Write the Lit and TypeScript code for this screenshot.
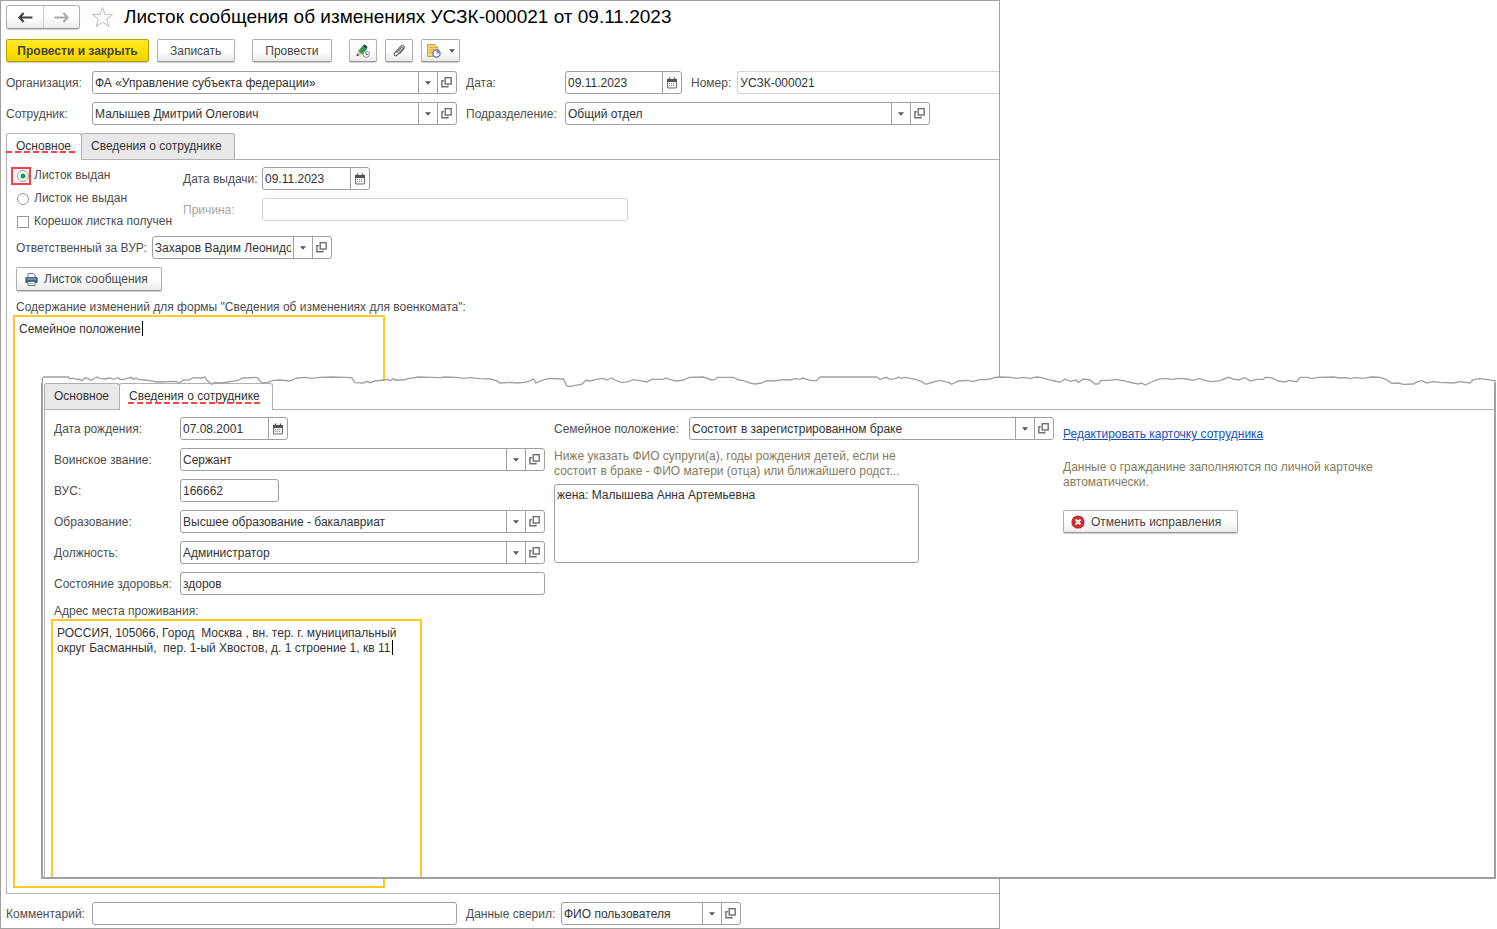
import { LitElement, html, css } from "lit";
import { customElement } from "lit/decorators.js";
import { classMap } from "lit/directives/class-map.js";

// Torn edge outline, in thirds of a pixel: [x offset, x, y, x, y, ...]
const EDGE: number[][] = [
  [0, 37, 75, 37, 40, 42, 36, 115, 36, 120, 42, 128, 39, 135, 42, 150, 43, 157, 47, 165, 38, 175, 41, 182, 46, 190, 42, 200, 36, 210, 40, 225, 42, 240, 39, 250, 43, 265, 38, 270, 43, 283, 43, 292, 40, 303, 37, 310, 43, 318, 39, 325, 43, 345, 45, 360, 47, 380, 51, 440, 49, 445, 54, 455, 49, 462, 44, 475, 46, 490, 38, 515, 39, 525, 36, 530, 45, 545, 58, 553, 52, 575, 54, 600, 50, 625, 46, 640, 38, 655, 39, 670, 37, 683, 38, 690, 47, 697, 53, 712, 53, 730, 46, 750, 45, 780, 48, 800, 39, 825, 37, 845, 40, 870, 37, 905, 36, 965, 38, 975, 53, 1000, 54, 1010, 49, 1020, 53, 1035, 48, 1060, 45, 1075, 43, 1080, 48, 1090, 41, 1095, 45, 1120, 45, 1140, 40, 1165, 36, 1200, 37, 1230, 38, 1245, 36, 1280, 37, 1300, 40, 1320, 38, 1350, 41, 1380, 42, 1400, 47, 1410, 54],
  [1410, 30, 52, 50, 54, 75, 52, 90, 48, 100, 42, 108, 54, 120, 49, 135, 43, 150, 40, 190, 42, 200, 62, 210, 65, 225, 61, 245, 58, 258, 46, 270, 48, 290, 43, 310, 40, 320, 45, 335, 39, 345, 45, 365, 53, 385, 50, 400, 44, 420, 47, 440, 51, 455, 43, 490, 43, 498, 39, 510, 44, 530, 48, 550, 45, 568, 37, 610, 36, 635, 45, 645, 44, 652, 37, 700, 37, 718, 45, 730, 47, 750, 54, 765, 57, 785, 54, 800, 47, 820, 48, 850, 44, 870, 45, 885, 41, 900, 43, 908, 39, 920, 43, 935, 47, 950, 47, 960, 36, 1130, 36, 1140, 43, 1160, 37, 1170, 43, 1190, 40, 1195, 36, 1205, 40, 1215, 37, 1250, 44, 1265, 50, 1278, 58, 1300, 51, 1320, 46, 1345, 52, 1355, 58, 1375, 48, 1400, 46, 1420, 49, 1440, 44, 1460, 44],
  [2880, 0, 42, 15, 37, 30, 36, 60, 37, 80, 40, 100, 37, 120, 40, 140, 36, 155, 38, 175, 44, 195, 48, 210, 52, 225, 42, 240, 49, 258, 45, 265, 52, 280, 42, 300, 45, 315, 57, 325, 57, 333, 46, 360, 46, 375, 43, 400, 47, 430, 54, 445, 57, 455, 54, 465, 60, 485, 51, 505, 43, 525, 40, 545, 43, 570, 40, 590, 42, 610, 46, 628, 40, 645, 46, 665, 50, 690, 47, 715, 37, 730, 42, 745, 45, 765, 38, 782, 48, 800, 43, 820, 43, 825, 37, 845, 38, 865, 48, 885, 51, 895, 46, 920, 50, 930, 37, 955, 37, 965, 41, 985, 37, 1030, 36, 1050, 39, 1070, 38, 1080, 41, 1095, 38, 1120, 40, 1145, 36, 1170, 37, 1190, 44, 1205, 55, 1225, 54, 1240, 58, 1270, 57, 1280, 51, 1297, 47, 1310, 54, 1330, 50, 1350, 52, 1390, 54, 1412, 50, 1440, 54, 1450, 44, 1470, 41, 1490, 43, 1512, 47, 1515, 47, 1515, 75],
];
const EDGE_POINTS = EDGE.map(([dx, ...p]) =>
  p.map((v, i) => (i % 2 ? `${v}` : `${v + dx}`)).join(" "),
).join(" ");

const arrowDown = html`<svg class="ic" width="6" height="4" viewBox="0 0 6 4" aria-hidden="true"><path d="M0 0.300h6L3 3.800z" fill="#555" /></svg>`;
const openIcon = html`<svg class="ic" width="12" height="11" viewBox="0 0 12 11" aria-hidden="true"><g fill="none" stroke="#707070" stroke-width="1.400"><rect x="4.200" y="0.700" width="6" height="6.300" /><path d="M2.800 3.700H0.900v6h6V8.400" /></g></svg>`;
const calendarIcon = html`<svg class="ic" width="12" height="12" viewBox="0 0 12 12" aria-hidden="true"><path d="M1.500 2.500h9v8.500h-9z" fill="#eee" stroke="#777" /><path d="M1 2h10v3H1z" fill="#555" /><path d="M3.500 0.600v2.400M8.500 0.600v2.400" stroke="#555" stroke-width="1.400" /><path d="M3 6.500h6M3 8.500h6" stroke="#999" stroke-dasharray="1 1" /></svg>`;
const backIcon = html`<svg class="ic" width="15" height="11" viewBox="0 0 15 11" aria-hidden="true"><path d="M5.600 1L1.400 5.500l4.200 4.500M1.600 5.500H14.500" fill="none" stroke="currentColor" stroke-width="2.200" /></svg>`;
const forwardIcon = html`<svg class="ic" width="15" height="11" viewBox="0 0 15 11" aria-hidden="true"><path d="M9.400 1l4.200 4.500L9.400 10M13.400 5.500H0.500" fill="none" stroke="currentColor" stroke-width="2" /></svg>`;
const starIcon = html`<svg class="ic" width="23" height="22" viewBox="0 0 23 22" aria-hidden="true"><path d="M11.500 1.400l2.600 7h7.600l-6.100 4.700 2.300 7.500-6.400-4.500-6.400 4.500 2.300-7.500L1.300 8.400h7.600z" fill="#fff" stroke="#b4bcc6" /></svg>`;
const pencilIcon = html`<svg class="ic" width="14" height="14" viewBox="0 0 14 14" aria-hidden="true"><path d="M6.200 2.200L8.600 0.300l2.900 2.400-1 2.900z" fill="#33474d" /><path d="M6.400 2l4.200 3.600-4.400 4.800-4.100-3.300z" fill="#2f9e4b" /><path d="M2.100 7.100l4 3.300-5 1.400z" fill="#e8b98a" /><path d="M0.400 12.200l0.900-2.600 1.700 1.800z" fill="#333" /><circle cx="10.200" cy="10.200" r="3.200" fill="#eef3f7" stroke="#8193a5" /><path d="M10 8.200v2.200h1.800" fill="none" stroke="#56697c" /></svg>`;
const clipIcon = html`<svg class="ic" width="12" height="13" viewBox="0 0 12 13" aria-hidden="true"><path d="M3.600 8.800l4.600-5c1-1 2.300.1 1.400 1.200l-5.400 6c-1.700 1.700-4-.3-2.500-2.100l5.900-6.600c2-2 4.900.3 3.100 2.700L6.400 9.900" fill="none" stroke="#666" stroke-width="1.100" /></svg>`;
const reportIcon = html`<svg class="ic" width="14" height="14" viewBox="0 0 14 14" aria-hidden="true"><path d="M0.500 0.500h7.500l3 3v9H0.500z" fill="#f3d271" stroke="#cda544" /><path d="M8 0.500v3h3" fill="#fff0bd" stroke="#cda544" /><path d="M2.500 3.500h4M2.500 6h5M2.500 8.500h3" stroke="#d2ab49" /><circle cx="9.500" cy="9.500" r="3.600" fill="#fff" stroke="#5877a5" stroke-width="1.300" /><path d="M9.500 9.500V6.500a3 3 0 0 1 3 3z" fill="#6d93c9" /></svg>`;
const printIcon = html`<svg class="ic" width="13" height="13" viewBox="0 0 13 13" aria-hidden="true"><path d="M3 4V0.600h5.500L10 2v2" fill="#fff" stroke="#5f7690" /><rect x="0.300" y="4" width="12.400" height="6" rx="1.200" fill="#3c628a" /><path d="M2 6h9" stroke="#9db6cf" /><path d="M3 8.500h7v4H3z" fill="#fff" stroke="#5f7690" /><path d="M4.500 10.500h4" stroke="#9aa9b8" /></svg>`;
const cancelIcon = html`<svg class="ic" width="14" height="14" viewBox="0 0 14 14" aria-hidden="true"><circle cx="7" cy="7" r="6.600" fill="#cf2a30" /><path d="M4.500 4.500l5 5M9.500 4.500l-5 5" stroke="#fff" stroke-width="2" /></svg>`;

const combo = (id: string, value: string) => html`
  <div class="field combo">
    <select id=${id}><option>${value}</option></select>
    <span class="arrow">${arrowDown}</span>
    <button class="side" aria-label="Открыть">${openIcon}</button>
  </div>`;

const dateField = (id: string, value: string) => html`
  <div class="field date">
    <input id=${id} type="text" .value=${value} />
    <button class="side cal" aria-label="Выбрать дату">${calendarIcon}</button>
  </div>`;

const tabs = (active: number) => html`
  <div class="tabs" role="tablist">
    ${["Основное", "Сведения о сотруднике"].map(
      (name, i) => html`<button role="tab" aria-selected=${i === active ? "true" : "false"}
        class=${classMap({ tab: true, active: i === active })}>${name}</button>`,
    )}
  </div>`;

@customElement("app-root")
export class AppRoot extends LitElement {
  static styles = css`
    :host { display: block; position: relative; min-height: 100vh; background: #fff;
      font: 12px/15px "Liberation Sans", Arial, sans-serif; color: #4d4d4d; }
    * { box-sizing: border-box; }
    button, input, select, textarea { font: inherit; color: #333; margin: 0; border-radius: 0; outline: none; }
    h1 { margin: 0; font-size: 19px; line-height: 24px; font-weight: 400; color: #000; white-space: nowrap; }
    p { margin: 0; }
    .ic { display: block; flex: none; }

    .window { width: 66.8%; min-height: 100vh; display: flex; flex-direction: column; overflow: hidden;
      border: 1px solid #a0a0a0; padding: 4px 0 3px 5px; }
    .head { display: flex; align-items: center; gap: 10px; margin-bottom: 10px; }
    .nav { display: flex; height: 24px; border: 1px solid #b0b0b0; border-bottom-color: #999; border-radius: 3px; margin-right: 1px;
      background: linear-gradient(#fff, #fff 50%, #ececec); box-shadow: 0 1px 1px #ccc; }
    .nav button { width: 36px; border: 0; padding: 0; background: none; display: grid; place-items: center; color: #444; }
    .nav button + button { border-left: 1px solid #ccc; color: #aaa; }
    .star { border: 0; padding: 0; background: none; }

    .toolbar { display: flex; gap: 8px; margin-bottom: 9px; }
    .btn { height: 23px; display: inline-flex; align-items: center; justify-content: center; gap: 6px; padding: 1px 13px 0 12px;
      border: 1px solid #b0b0b0; border-bottom-color: #999; border-radius: 2px; color: #444;
      background: linear-gradient(#fff, #fff 50%, #ebebeb); box-shadow: 0 1px 1px #ccc; white-space: nowrap; }
    .btn.main { font-weight: 700; min-width: 143px; padding: 1px 10px 0; border-color: #b5a100; background: linear-gradient(#ffe92e, #ffe100 50%, #efd000); }
    .btn.square { width: 28px; padding: 0; }
    .btn.menu { width: 39px; padding: 0; gap: 8px; }
    .group { display: flex; gap: 8px; margin-left: 9px; }

    .requisites { display: grid; grid-template-columns: 86px 365px 9px 99px 365px 1fr; row-gap: 8px; align-items: center; margin-bottom: 8px; }
    .requisites .second { grid-column: 4; }
    .requisites .rest { grid-column: 5 / -1; display: flex; align-items: center; }
    .requisites label, .rows label, .status label, .details label, .line label, .footer label { padding-top: 2px; }
    .number-label { margin: 0 6px 0 9px; }

    .field { display: flex; height: 23px; border: 1px solid #a0a0a0; border-radius: 3px; background: #fff; overflow: hidden; min-width: 0; }
    .field input { flex: 1; min-width: 0; width: 0; border: 0; padding: 2px 2px 0; background: none; }
    .combo { display: grid; grid-template-columns: 1fr 19px 19px; grid-template-rows: 21px; }
    .combo select { grid-area: 1 / 1 / 2 / 3; appearance: none; border: 0; background: none; padding: 2px 21px 0 2px; min-width: 0; width: 100%; height: 100%; }
    .arrow { grid-area: 1 / 2; border-left: 1px solid #a0a0a0; display: grid; place-items: center; pointer-events: none; }
    .side { border: 0; border-left: 1px solid #a0a0a0; background: none; padding: 0; display: grid; place-items: center; }
    .side.cal { width: 19px; }
    .date { width: 108px; }
    .wide .date { width: 117px; }
    .plain { height: 23px; border: 1px solid #a0a0a0; border-radius: 3px; padding: 0 2px; background: #fff; min-width: 0; width: 100%; }
    .plain.faint { border-color: #d4d4d4; }
    .plain.open { flex: 1; border-right: 0; border-radius: 3px 0 0 3px; }
    .plain.short { width: 99px; }

    .tabs { display: flex; position: relative; }
    .tab { height: 26px; padding: 0 10px 0 9px; border: 1px solid #b0b0b0; border-bottom: 0; border-radius: 3px 3px 0 0; background: #e9e9e9; text-align: left; }
    .tab + .tab { margin-left: -1px; min-width: 154px; }
    .tab.active { height: 27px; margin-bottom: -1px; padding-bottom: 2px; background: #fff; position: relative; }
    .tab.active::after { content: ""; position: absolute; left: 8px; right: 9px; bottom: 6px; height: 2px;
      background: repeating-linear-gradient(90deg, #ff4040 0 6px, transparent 6px 9px); }
    .window > .tabs .tab.active::after { left: -1px; right: 5px; bottom: 7px; }

    .panel { flex: 1; display: flex; flex-direction: column; align-items: flex-start; border: 1px solid #b0b0b0; border-right: 0;
      padding: 4px 9px 5px 9px; margin-bottom: 8px; }
    .issue { display: grid; grid-template-columns: 167px auto; margin-bottom: 3px; }
    .choice { display: flex; align-items: center; gap: 4px; height: 23px; white-space: nowrap; }
    .choice span { width: 14px; display: grid; place-items: center; }
    .choice input { appearance: none; width: 12px; height: 12px; border: 1px solid #999; margin: 0; background: #fff; }
    .choice input[type="radio"] { border-radius: 50%; }
    .choice input[type="radio"]:checked { background: radial-gradient(circle, #149447 0 2px, #fff 3px); }
    .choice .marked { outline: 2px solid #f04545; height: 14px; width: 16px; margin: 0 1px 0 -3px; justify-items: end; }
    .details { display: grid; grid-template-columns: 79px 366px; row-gap: 8px; align-items: center; align-content: start; padding-top: 3px; }
    .muted { color: #a6a6a6; }
    .line { display: flex; align-items: center; gap: 5px; margin-bottom: 8px; }
    .line .combo { width: 180px; }
    .print { margin-bottom: 9px; height: 24px; padding: 0 13px 0 8px; }
    .focus { position: relative; display: flex; margin-left: -3px; width: 372px; border: 2px solid #fbcb21; background: #fff; flex: 1; }
    .focus textarea { flex: 1; border: 0; padding: 5px 4px 4px; resize: none; background: none; overflow: hidden; }
    .caret { position: absolute; width: 1px; height: 15px; background: #000; }
    .caret.first { left: 127px; top: 4px; }
    .caret.last { left: 339px; top: 19px; }

    .footer { display: grid; grid-template-columns: 86px 365px 9px 95px 180px; align-items: center; }
    .footer .third { grid-column: 4; }

    .sheet { position: absolute; left: 41px; right: 1px; top: 376px; bottom: 50px; display: flex; flex-direction: column; }
    .edge { position: absolute; left: 0; top: 0; width: 100%; height: 14px; overflow: visible; pointer-events: none; }
    .edge .paper { fill: #fff; stroke: none; }
    .edge .rip { fill: none; stroke: #a0a0a0; stroke-width: 4; }
    .sheet-body { flex: 1; margin-top: 7px; padding-left: 1px; display: flex; flex-direction: column; background: #fff;
      border: 2px solid #a0a0a0; border-top: 0; position: relative; min-height: 0; }
    .edge.over { z-index: 2; }
    .edge.under { z-index: 0; }
    .sheet-panel { flex: 1; min-height: 0; display: grid; grid-template-columns: 491px 500px 1fr; column-gap: 9px; grid-template-rows: 1fr;
      border: 1px solid #b0b0b0; border-right: 0; border-bottom: 0; padding: 7px 9px 0 9px; }
    .person { display: flex; flex-direction: column; min-height: 0; }
    .rows { display: grid; grid-template-columns: 126px 365px; row-gap: 8px; align-items: center; margin-bottom: 9px; }
    .person .focus { width: 371px; border-bottom: 0; }
    .status { display: grid; grid-template-columns: 135px 365px; align-items: center; }
    .hint { color: #857b5c; }
    .family .hint { margin: 9px 0 5px; width: 365px; }
    .family textarea { display: block; width: 365px; height: 79px; border: 1px solid #a0a0a0; border-radius: 3px; padding: 3px 2px; resize: none; }
    .actions { padding-top: 10px; }
    .actions a { color: #1a50b8; }
    .actions .hint { margin: 18px 0 20px; width: 340px; }
    .actions .btn { padding: 1px 16px 0 7px; }
  `;

  render() {
    return html`
      <main class="window">
        <header class="head">
          <div class="nav">
            <button aria-label="Назад">${backIcon}</button>
            <button aria-label="Вперед">${forwardIcon}</button>
          </div>
          <button class="star" aria-label="В избранное">${starIcon}</button>
          <h1>Листок сообщения об изменениях УСЗК-000021 от 09.11.2023</h1>
        </header>

        <div class="toolbar">
          <button class="btn main">Провести и закрыть</button>
          <button class="btn">Записать</button>
          <div class="group"><button class="btn">Провести</button></div>
          <div class="group">
            <button class="btn square" aria-label="Изменить">${pencilIcon}</button>
            <button class="btn square" aria-label="Файлы">${clipIcon}</button>
            <button class="btn menu" aria-label="Отчеты">${reportIcon}${arrowDown}</button>
          </div>
        </div>

        <div class="requisites">
          <label for="org">Организация:</label>
          ${combo("org", "ФА «Управление субъекта федерации»")}
          <label class="second" for="date">Дата:</label>
          <div class="rest wide">
            ${dateField("date", "09.11.2023")}
            <label class="number-label" for="number">Номер:</label>
            <input class="plain faint open" id="number" type="text" readonly .value=${"УСЗК-000021"} />
          </div>
          <label for="employee">Сотрудник:</label>
          ${combo("employee", "Малышев Дмитрий Олегович")}
          <label class="second" for="unit">Подразделение:</label>
          ${combo("unit", "Общий отдел")}
        </div>

        ${tabs(0)}
        <section class="panel">
          <div class="issue">
            <div>
              <label class="choice"><span class="marked"><input type="radio" name="issued" checked /></span>Листок выдан</label>
              <label class="choice"><span><input type="radio" name="issued" /></span>Листок не выдан</label>
              <label class="choice"><span><input type="checkbox" /></span>Корешок листка получен</label>
            </div>
            <div class="details">
              <label for="issue-date">Дата выдачи:</label>
              ${dateField("issue-date", "09.11.2023")}
              <label class="muted" for="reason">Причина:</label>
              <input class="plain faint" id="reason" type="text" disabled />
            </div>
          </div>
          <div class="line">
            <label for="responsible">Ответственный за ВУР:</label>
            ${combo("responsible", "Захаров Вадим Леонидович")}
          </div>
          <button class="btn print">${printIcon}Листок сообщения</button>
          <label for="changes">Содержание изменений для формы "Сведения об изменениях для военкомата":</label>
          <div class="focus">
            <textarea id="changes" .value=${"Семейное положение"}></textarea>
            <i class="caret first"></i>
          </div>
        </section>

        <footer class="footer">
          <label for="comment">Комментарий:</label>
          <input class="plain" id="comment" type="text" />
          <label class="third" for="checked">Данные сверил:</label>
          ${combo("checked", "ФИО пользователя")}
        </footer>
      </main>

      <section class="sheet">
        <svg class="edge under" viewBox="33 33 4365 42" preserveAspectRatio="none" aria-hidden="true">
          <polygon class="paper" points=${EDGE_POINTS}></polygon>
        </svg>
        <svg class="edge over" viewBox="33 33 4365 42" preserveAspectRatio="none" aria-hidden="true">
          <polyline class="rip" points=${EDGE_POINTS}></polyline>
        </svg>
        <div class="sheet-body">
          ${tabs(1)}
          <div class="sheet-panel">
            <div class="person">
              <div class="rows">
                <label for="birth">Дата рождения:</label>
                ${dateField("birth", "07.08.2001")}
                <label for="rank">Воинское звание:</label>
                ${combo("rank", "Сержант")}
                <label for="vus">ВУС:</label>
                <input class="plain short" id="vus" type="text" .value=${"166662"} />
                <label for="education">Образование:</label>
                ${combo("education", "Высшее образование - бакалавриат")}
                <label for="position">Должность:</label>
                ${combo("position", "Администратор")}
                <label for="health">Состояние здоровья:</label>
                <input class="plain" id="health" type="text" .value=${"здоров"} />
              </div>
              <label for="address">Адрес места проживания:</label>
              <div class="focus">
                <textarea id="address" .value=${"РОССИЯ, 105066, Город  Москва , вн. тер. г. муниципальный округ Басманный,  пер. 1-ый Хвостов, д. 1 строение 1, кв 11"}></textarea>
                <i class="caret last"></i>
              </div>
            </div>
            <div class="family">
              <div class="status">
                <label for="status">Семейное положение:</label>
                ${combo("status", "Состоит в зарегистрированном браке")}
              </div>
              <p class="hint">Ниже указать ФИО супруги(а), годы рождения детей, если не состоит в браке - ФИО матери (отца) или ближайшего родст...</p>
              <textarea aria-label="Состав семьи" .value=${"жена: Малышева Анна Артемьевна"}></textarea>
            </div>
            <div class="actions">
              <a href="#card">Редактировать карточку сотрудника</a>
              <p class="hint">Данные о гражданине заполняются по личной карточке автоматически.</p>
              <button class="btn">${cancelIcon}Отменить исправления</button>
            </div>
          </div>
        </div>
      </section>
    `;
  }
}
